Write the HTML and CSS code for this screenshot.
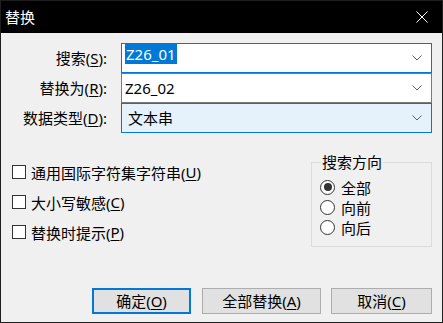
FILE: index.html
```html
<!DOCTYPE html>
<html lang="zh-CN">
<head>
<meta charset="utf-8">
<title>替换</title>
<link rel="stylesheet" href="styles.css">
</head>
<body>
<div class="window">
  <div class="titlebar">
    <span class="title">替换</span>
    <svg class="close" width="12" height="12" viewBox="0 0 12 12"><path d="M0.5 0.5 L11.5 11.5 M11.5 0.5 L0.5 11.5" stroke="#fff" stroke-width="1" fill="none"/></svg>
  </div>
  <div class="content">
    <div class="form">
      <label class="lbl">搜索(<u>S</u>):</label>
      <div class="combo focused"><span class="val top"><span class="sel">Z26_01</span></span><svg class="chev" width="10" height="6" viewBox="0 0 10 6"><path d="M0.5 0.5 L5 5 L9.5 0.5" stroke="#606060" fill="none" stroke-width="1"/></svg></div>
      <label class="lbl">替换为(<u>R</u>):</label>
      <div class="combo"><span class="val">Z26_02</span><svg class="chev" width="10" height="6" viewBox="0 0 10 6"><path d="M0.5 0.5 L5 5 L9.5 0.5" stroke="#606060" fill="none" stroke-width="1"/></svg></div>
      <label class="lbl">数据类型(<u>D</u>):</label>
      <div class="combo hover"><span class="val list">文本串</span><svg class="chev" width="10" height="6" viewBox="0 0 10 6"><path d="M0.5 0.5 L5 5 L9.5 0.5" stroke="#606060" fill="none" stroke-width="1"/></svg></div>
    </div>
    <div class="options">
      <div class="checks">
        <div class="check"><span class="box"></span>通用国际字符集字符串(<u>U</u>)</div>
        <div class="check"><span class="box"></span>大小写敏感(<u>C</u>)</div>
        <div class="check"><span class="box"></span>替换时提示(<u>P</u>)</div>
      </div>
      <fieldset class="group">
        <legend>搜索方向</legend>
        <div class="radio"><span class="dot on"></span>全部</div>
        <div class="radio"><span class="dot"></span>向前</div>
        <div class="radio"><span class="dot"></span>向后</div>
      </fieldset>
    </div>
    <div class="buttons">
      <div class="btn default w99">确定(<u>O</u>)</div>
      <div class="btn w119">全部替换(<u>A</u>)</div>
      <div class="btn w101">取消(<u>C</u>)</div>
    </div>
  </div>
</div>
</body>
</html>
```
FILE: styles.css
```css
* { box-sizing: border-box; }
html, body { margin: 0; padding: 0; }
body {
  font-family: "Noto Sans", "Noto Sans CJK SC", sans-serif;
  font-size: 15px;
  color: #000;
  background: #f0f0f0;
}
u { text-decoration: underline; text-underline-offset: 2px; text-decoration-thickness: 1px; }
.window {
  width: 443px;
  height: 323px;
  border: 1px solid #1f1f1f;
  background: #f0f0f0;
  display: flex;
  flex-direction: column;
}
.titlebar {
  height: 32px;
  flex: none;
  background: #000;
  color: #fff;
  display: flex;
  align-items: center;
  justify-content: space-between;
  padding: 0 14px 0 4px;
}
.title { font-size: 15px; line-height: 20px; }
.close { display: block; }
.content { padding: 10px 10px 0 0; flex: 1; display: flex; flex-direction: column; }
.form {
  display: grid;
  grid-template-columns: 106px 311px;
  grid-auto-rows: 30px;
  column-gap: 14px;
  align-items: center;
}
.lbl { text-align: right; line-height: 20px; white-space: nowrap; }
.combo {
  height: 30px;
  border: 1px solid #7a7a7a;
  background: #fff;
  display: flex;
  align-items: center;
  justify-content: space-between;
  padding: 0 9px 0 2px;
}
.combo.focused { border-color: #0078d7; }
.combo.hover { border-color: #0078d7; background: #e5f1fb; }
.val { line-height: 20px; padding-left: 1px; }
.val.top { align-self: flex-start; margin-top: 0; }
.val.list { padding-left: 4px; }
.sel { background: #0078d7; color: #fff; display: inline-block; padding: 0 1px; }
.chev { display: block; }
.options {
  display: flex;
  justify-content: space-between;
  margin-top: 19px;
}
.checks { padding: 5px 0 0 11px; }
.check { height: 30px; display: flex; align-items: center; white-space: nowrap; }
.box {
  width: 14px; height: 14px;
  border: 1px solid #333;
  background: #fff;
  margin-right: 5px;
  flex: none;
}
.group {
  margin: 0;
  width: 121px;
  border: 1px solid #dcdcdc;
  padding: 5px 6px 4px 8px;
  min-width: 0;
}
.group legend { padding: 0 1px; margin-left: 1px; line-height: 20px; }
.radio { height: 20px; display: flex; align-items: center; }
.dot {
  width: 15px; height: 15px;
  border: 1px solid #333;
  border-radius: 50%;
  background: #fff;
  margin-right: 6px;
  display: flex; align-items: center; justify-content: center;
  flex: none;
}
.dot.on::after {
  content: "";
  width: 8px; height: 8px;
  border-radius: 50%;
  background: #333;
}
.buttons {
  display: flex;
  justify-content: flex-end;
  gap: 10px;
  margin-top: 41px;
}
.btn {
  height: 26px;
  background: #e1e1e1;
  border: 1px solid #adadad;
  display: flex;
  align-items: center;
  justify-content: center;
  line-height: 20px;
}
.btn.default { border: 2px solid #0078d7; margin-right: 1px; }
.w99 { width: 99px; }
.w119 { width: 119px; }
.w101 { width: 101px; }
```
